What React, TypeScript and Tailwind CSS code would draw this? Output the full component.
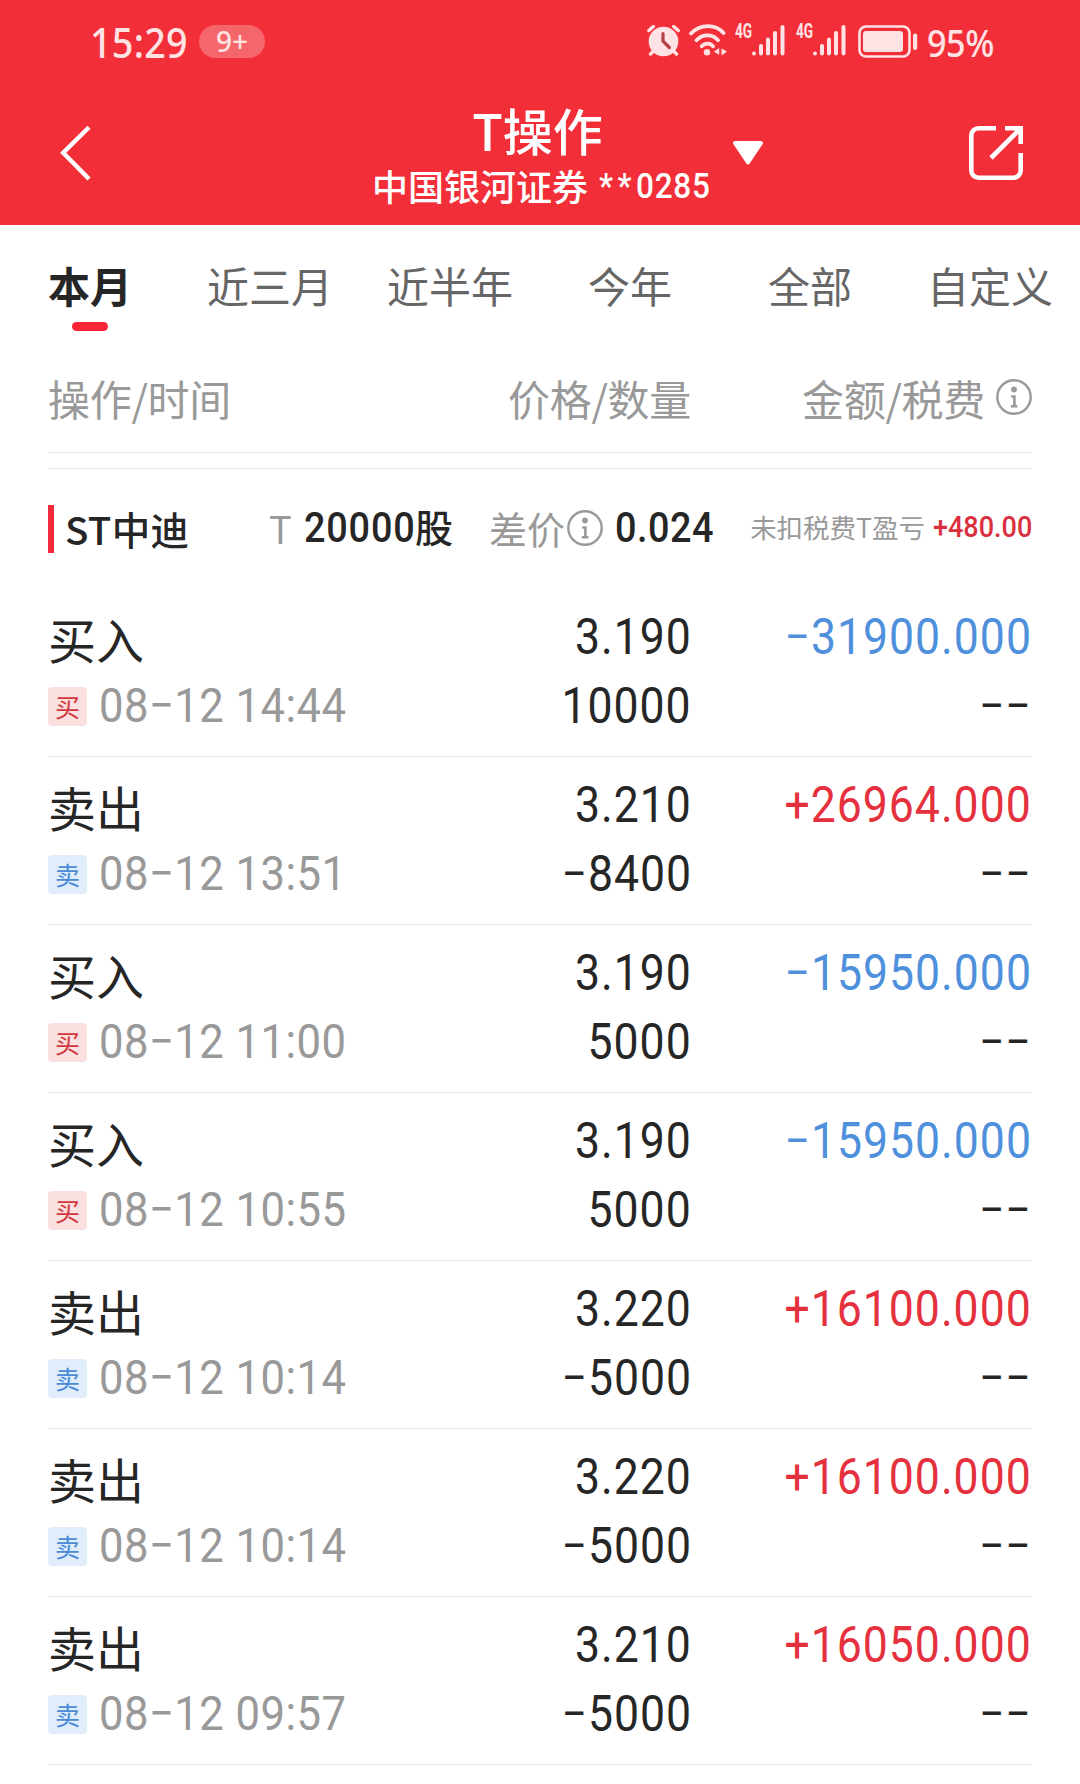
import React, { useState } from 'react';
import clsx from 'clsx';

type Side = 'buy' | 'sell';

interface Trade {
  side: Side;
  time: string;
  price: string;
  qty: string;
  amount: string;
}

const tabs = ['本月', '近三月', '近半年', '今年', '全部', '自定义'];

const trades: Trade[] = [
  { side: 'buy', time: '08−12 14:44', price: '3.190', qty: '10000', amount: '−31900.000' },
  { side: 'sell', time: '08−12 13:51', price: '3.210', qty: '−8400', amount: '+26964.000' },
  { side: 'buy', time: '08−12 11:00', price: '3.190', qty: '5000', amount: '−15950.000' },
  { side: 'buy', time: '08−12 10:55', price: '3.190', qty: '5000', amount: '−15950.000' },
  { side: 'sell', time: '08−12 10:14', price: '3.220', qty: '−5000', amount: '+16100.000' },
  { side: 'sell', time: '08−12 10:14', price: '3.220', qty: '−5000', amount: '+16100.000' },
  { side: 'sell', time: '08−12 09:57', price: '3.210', qty: '−5000', amount: '+16050.000' },
];

// condensed digits
const num = "inline-block whitespace-nowrap scale-x-90 font-['Roboto','Noto_Sans_CJK_SC',sans-serif]";

function InfoIcon() {
  return (
    <svg width="36" height="36" viewBox="0 0 36 36" fill="none" className="shrink-0">
      <circle cx="18" cy="18" r="16.7" stroke="#999" strokeWidth="2.4" />
      <circle cx="18" cy="10.5" r="2.9" fill="#999" />
      <path d="M15.2 17.500h3.200V27M14.800 27.200h6.600" stroke="#999" strokeWidth="2.600" />
    </svg>
  );
}

function Signal() {
  return (
    <div className="flex items-start">
      <span className="font-['Roboto','Liberation_Sans',sans-serif] w-[17px] text-[19.500px] leading-[14px] font-bold scale-x-[0.7] origin-left">4G</span>
      <svg width="33" height="31" viewBox="0 0 33 31" fill="none" stroke="#ffe3e4" strokeWidth="4" strokeLinecap="round">
        <path d="M2 28.5v.1M9 21v7.5M16 14.5v14M23 8v20.5M30.500 2v26.500" />
      </svg>
    </div>
  );
}

function StatusBar() {
  return (
    <div className="flex h-[84px] items-start pl-[90px] pr-[84px] text-[#ffe3e4] font-['Noto_Sans',sans-serif]">
      <span className="mt-[21px] w-[109px] text-[41px] leading-[42px] font-medium tracking-[0.300px] origin-left scale-x-[0.92]">15:29</span>
      <span className="mt-[25px] flex h-[33px] w-[66px] items-center justify-center rounded-full bg-[#f5666b] pb-[2px] text-[28px] leading-none font-medium">9+</span>

      <div className="ml-auto flex items-start">
        {/* alarm */}
        <svg width="34" height="32" viewBox="0 0 34 32" fill="none" className="mt-[25px]">
          <circle cx="16.500" cy="16.500" r="14.800" fill="#ffe3e4" />
          <path d="M1.800 5.500l4.500-4M31.200 5.500l-4.500-4M6 26.500L3.500 29M27 26.500l2.500 2.500" stroke="#ffe3e4" strokeWidth="3.400" strokeLinecap="round" />
          <path d="M16 8.500v7.700l6.300 6.300" stroke="#b5404a" strokeWidth="3.200" strokeLinecap="round" strokeLinejoin="round" />
        </svg>
        {/* wifi */}
        <svg width="39" height="32" viewBox="0 0 39 32" fill="none" className="mt-[24px] ml-[8px]">
          <path d="M2 9.500C11.500-.3 26.500-.3 34.500 9M7.500 16.200c6.200-6.400 15.800-6.400 21.500 0M12.800 22.300c3.400-3.600 8.200-3.600 11.200 0" stroke="#ffe3e4" strokeWidth="3.800" strokeLinecap="round" />
          <circle cx="18" cy="28.300" r="3.200" fill="#ffe3e4" />
          <path d="M30.200 24v7l-5.200-3.500zM32.500 24.500l5.500 3-5.500 4z" fill="#ffe3e4" />
        </svg>
        <div className="mt-[25px] ml-[7px]">
          <Signal />
        </div>
        <div className="mt-[25px] ml-[11px]">
          <Signal />
        </div>
        {/* battery */}
        <svg width="60" height="33" viewBox="0 0 60 33" fill="none" className="mt-[25px] ml-[12px]">
          <rect x="1.500" y="1.500" width="50" height="30" rx="6.500" stroke="#ffe3e4" strokeWidth="2.600" />
          <rect x="5" y="6" width="40" height="21" rx="3" fill="#ffe3e4" />
          <rect x="55" y="8.500" width="4.200" height="16.500" rx="2.100" fill="#ffe3e4" />
        </svg>
        <span className="mt-[21px] ml-[9px] w-[69px] text-[38px] leading-[42px] font-medium tracking-[-0.500px] origin-left scale-x-90">95%</span>
      </div>
    </div>
  );
}

function Header() {
  return (
    <header className="h-[225px] bg-[#f22f38] text-white">
      <StatusBar />
      <div className="grid grid-cols-[240px_1fr_240px]">
        <svg width="34" height="60" viewBox="0 0 34 60" fill="none" className="mt-[39px] ml-[58px]">
          <path d="M31 4.300L5.200 29.700 31 56" stroke="#fff" strokeWidth="4.400" />
        </svg>
        <div className="relative flex flex-col items-center">
          <h1 className="mt-[17px] -ml-[5px] text-[50px] leading-[56px] font-medium">T操作</h1>
          <div className="mt-[5px] flex w-[340px] items-center pl-[2px] text-[36px] leading-[40px] font-medium whitespace-nowrap">
            中国银河证券
            <span className={clsx(num, 'mt-[5px] ml-[11px] origin-left text-[35px] tracking-[0.900px]')}>
              <span className="tracking-[5px]">**</span>0285
            </span>
          </div>
          <svg width="32" height="26" viewBox="0 0 32 26" className="absolute left-[492px] top-[56px]">
            <path d="M3 3h26L16 22.500z" fill="#fff" stroke="#fff" strokeWidth="4" strokeLinejoin="round" />
          </svg>
        </div>
        <svg width="54" height="54" viewBox="0 0 54 54" fill="none" stroke="#fff" strokeWidth="4.600" className="mt-[42px] ml-[129px]">
          <path d="M27 2.300H9.500a7.200 7.200 0 0 0-7.200 7.200v35a7.200 7.200 0 0 0 7.200 7.200h35a7.200 7.200 0 0 0 7.200-7.200V27" />
          <path d="M36 2.300h15.700V18M51 3L22 32" />
        </svg>
      </div>
    </header>
  );
}

function TradeRow({ trade }: { trade: Trade }) {
  const buy = trade.side === 'buy';
  return (
    <div className="flex h-[168px] border-b border-[#e9e9e9] pt-[22px] text-[49.500px] leading-[52px] tracking-[1.100px]">
      <div className="w-[352px]">
        <div className="-mt-[1px] text-[48px] leading-[56px] tracking-normal">{buy ? '买入' : '卖出'}</div>
        <div className="mt-[10px] flex h-[60px] items-center">
          <span
            className={clsx(
              'flex h-[39px] w-[39px] items-center justify-center rounded-[4px] text-[25px] leading-none tracking-normal',
              buy ? 'bg-[#fbe0e0] text-[#d2373c]' : 'bg-[#e1edfb] text-[#4a8bd6]'
            )}
          >
            {buy ? '买' : '卖'}
          </span>
          <span className={clsx(num, 'ml-[12px] origin-left text-[48.500px] leading-[60px] font-normal tracking-[0.500px] text-[#999]')}>
            {trade.time}
          </span>
        </div>
      </div>
      <div className="flex w-[292px] flex-col items-end">
        <span className={clsx(num, 'origin-right font-[450]')}>{trade.price}</span>
        <span className={clsx(num, 'mt-[17px] origin-right font-[450]')}>{trade.qty}</span>
      </div>
      <div className="flex flex-1 flex-col items-end">
        <span className={clsx(num, 'origin-right font-[450]', buy ? 'text-[#4f90dc]' : 'text-[#e5303d]')}>{trade.amount}</span>
        <span className={clsx(num, 'mt-[17px] origin-right font-[450]')}>−−</span>
      </div>
    </div>
  );
}

export default function App() {
  const [active, setActive] = useState('本月');

  return (
    <div className="h-[1784px] w-[1080px] overflow-hidden bg-white text-[#262626] font-['Noto_Sans_CJK_SC',sans-serif]">
      <Header />

      {/* TABS */}
      <div className="grid h-[114px] grid-cols-6 pt-[30px]">
        {tabs.map(tab => (
          <button key={tab} onClick={() => setActive(tab)} className="flex flex-col items-center whitespace-nowrap">
            <span className={clsx('text-[42px] leading-[60px]', active === tab ? 'font-bold' : 'text-[#666]')}>{tab}</span>
            {active === tab && <span className="mt-[7px] h-[9px] w-[36px] rounded-full bg-[#fa2638]" />}
          </button>
        ))}
      </div>

      <main className="mx-[48px]">
        <div className="flex h-[114px] items-start border-b border-[#e9e9e9] pt-[31px] text-[42px] leading-[56px] tracking-[-0.300px] text-[#999]">
          <span className="w-[352px]">操作/时间</span>
          <span className="w-[291px] text-right">价格/数量</span>
          <span className="flex-1 text-right">金额/税费</span>
          <div className="mt-[9px] ml-[11px]">
            <InfoIcon />
          </div>
        </div>

        {/* STOCK SUMMARY */}
        <div className="mt-[15px] flex h-[121px] items-start border-t border-[#e9e9e9] pt-[36px] leading-[48px]">
          <span className="h-[48px] w-[6px] bg-[#f02a3a]" />
          <span className="ml-[11px] -mt-[1px] w-[204px] text-[38.500px] font-medium tracking-[0.300px]">ST中迪</span>
          <span className="w-[35px] text-[38px] text-[#999] -mt-[1px]">T</span>
          <div className="-mt-[1px] flex w-[185px]">
            <span className={clsx(num, 'w-[111px] origin-left text-[42px] font-medium tracking-[0.900px]')}>20000</span>
            <span className="-mt-[2px] text-[38px] font-medium">股</span>
          </div>
          <span className="w-[78px] text-[38px] text-[#999] -mt-[1px]">差价</span>
          <div className="mt-[5px]">
            <InfoIcon />
          </div>
          <span className={clsx(num, '-mt-[1px] ml-[12px] w-[100px] origin-left text-[42px] font-medium tracking-[0.600px]')}>0.024</span>
          <div className="flex flex-1 items-start justify-end -mt-[2px]">
            <span className="mr-[9px] text-[26.500px] text-[#999] whitespace-nowrap">未扣税费T盈亏</span>
            <div className="flex w-[98px] shrink-0 justify-end">
              <span className={clsx(num, 'shrink-0 origin-right text-[30px] font-medium text-[#db3040]')}>+480.00</span>
            </div>
          </div>
        </div>

        {trades.map((trade, i) => (
          <TradeRow key={i} trade={trade} />
        ))}
      </main>
    </div>
  );
}
